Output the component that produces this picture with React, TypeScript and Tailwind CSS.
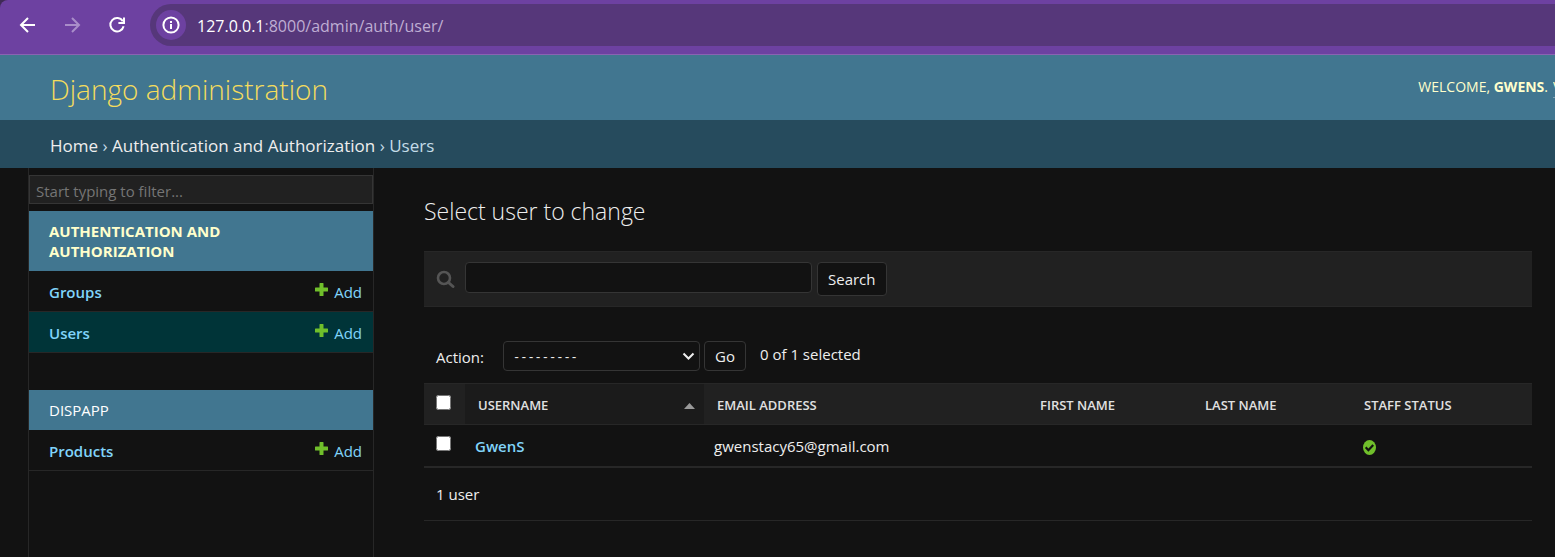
import type { ReactNode } from "react";

const models = [
  {
    app: "Authentication and Authorization",
    current: true,
    items: [
      { name: "Groups", current: false },
      { name: "Users", current: true },
    ],
  },
  { app: "Dispapp", current: false, items: [{ name: "Products", current: false }] },
];

function BrowserBar() {
  return (
    <div className="bg-[#3f2a56]">
      <div className="flex h-[55px] items-start rounded-tl-lg border-b border-[#8a62b2] bg-[#6d41a1] pt-1">
        <div className="flex h-[42px] shrink-0 items-center gap-[21px] pl-4 text-white">
          <button type="button" aria-label="Back">
            <svg className="size-6" viewBox="0 0 24 24" fill="none" stroke="currentColor" strokeWidth="2">
              <path d="M19 12H5.500M12 5l-7 7 7 7" />
            </svg>
          </button>
          <button type="button" aria-label="Forward" className="text-[#a98dc9]">
            <svg className="size-6" viewBox="0 0 24 24" fill="none" stroke="currentColor" strokeWidth="2">
              <path d="M4 12h13.500M11 5l7 7-7 7" />
            </svg>
          </button>
          <button type="button" aria-label="Reload">
            <svg className="size-6" viewBox="0 0 24 24" fill="none" stroke="currentColor" strokeWidth="2">
              <path d="M16.800 8.200A6.700 6.700 0 1 0 17.600 13.200M18 4.500V10h-5.600" />
            </svg>
          </button>
        </div>
        <div className="ml-5 flex h-[42px] flex-1 items-center gap-[11px] rounded-l-full bg-[#56377a] pl-[6px]">
          <button
            type="button"
            aria-label="Site information"
            className="flex size-[30px] items-center justify-center rounded-full bg-[#6d41a1] text-white"
          >
            <svg className="size-[18px]" viewBox="0 0 18 18" fill="none" stroke="currentColor" strokeWidth="2">
              <circle cx="9" cy="9" r="7.600" />
              <path d="M9 8v5M9 5v2" />
            </svg>
          </button>
          <div className="pt-[2px] text-[16px] text-[#bfaed3]">
            <span className="text-white">127.0.0.1</span>:8000/admin/auth/user/
          </div>
        </div>
      </div>
    </div>
  );
}

function PlusIcon() {
  return (
    <svg className="mb-[6px] size-[13px]" viewBox="0 0 13 13" fill="#70bf2b" aria-hidden="true">
      <path d="M5 0h3q.500 0 .500.500v4H12.500q.500 0 .500.500v3q0 .500-.500.500h-4v4q0 .500-.500.500H5q-.500 0-.500-.500v-4h-4Q0 8.500 0 8V5q0-.500.500-.500h4v-4Q4.500 0 5 0z" />
    </svg>
  );
}

function Sidebar() {
  return (
    <nav className="ml-7 w-[346px] shrink-0 border-x border-[#272727] pt-[7px]" aria-label="Sidebar">
      <input
        type="text"
        aria-label="Filter navigation items"
        placeholder="Start typing to filter..."
        className="mb-[7px] block h-[29px] w-full border border-[#353535] bg-[#212121] px-[6px] pt-[2px] text-[15px] text-[#eeeeee] placeholder:text-[#757575]"
      />
      {models.map((group) => (
        <section key={group.app} className="mb-[37px]">
          <h2
            className={
              group.current
                ? "bg-[#417690] px-5 py-[10px] text-[15px] leading-5 font-bold text-[#ffffcc] uppercase"
                : "bg-[#417690] px-5 py-[10px] text-[15px] leading-5 text-white uppercase"
            }
          >
            <a href="#app" className="block w-[220px]">{group.app}</a>
          </h2>
          {group.items.map((item) => (
            <div
              key={item.name}
              className={
                item.current
                  ? "flex h-[41px] items-center justify-between border-b border-[#272727] bg-[#003438] pt-[2px] pr-[11px] pl-5 text-[15px] text-[#81d4fa]"
                  : "flex h-[41px] items-center justify-between border-b border-[#272727] pt-[2px] pr-[11px] pl-5 text-[15px] text-[#81d4fa]"
              }
            >
              <a href="#list" className="font-semibold">{item.name}</a>
              <a href="#add" className="flex items-center gap-[6px]">
                <PlusIcon />
                Add
              </a>
            </div>
          ))}
        </section>
      ))}
    </nav>
  );
}

function ToolButton({ children }: { children: ReactNode }) {
  return (
    <button
      type="button"
      className="ml-[5px] rounded border border-[#353535] bg-[#121212] px-[10px] py-1 text-[15px] leading-6 text-[#eeeeee]"
    >
      {children}
    </button>
  );
}

function Th({ children }: { children: ReactNode }) {
  return <th className="px-[13px] pt-1 text-left font-semibold">{children}</th>;
}

function Changelist() {
  return (
    <main className="min-w-0 flex-1 pt-[26px] pr-[23px] pl-[50px] text-[#eeeeee]">
      <h1 className="text-[23px] leading-[34px] font-light">Select user to change</h1>
      <form className="mt-[23px] flex h-14 items-start border-y border-[#272727] bg-[#212121] pt-[10px] pl-3">
        <label htmlFor="searchbar" className="mt-2 mr-[10px]">
          <svg className="size-[19px]" viewBox="0 0 19 19" fill="none" stroke="#555555" aria-label="Search">
            <circle cx="8" cy="8" r="6" strokeWidth="2.600" />
            <path d="M12.500 12.500l4.500 4" strokeWidth="3" strokeLinecap="round" />
          </svg>
        </label>
        <input
          id="searchbar"
          type="text"
          className="h-[31px] w-[347px] rounded border border-[#353535] bg-[#121212] px-2 text-[15px]"
        />
        <ToolButton>Search</ToolButton>
      </form>
      <div className="mt-[33px] flex h-[32px] items-center pl-3 text-[15px]">
        <label htmlFor="action" className="w-[67px] pt-[2px]">Action:</label>
        <div className="relative w-[197px]">
          <select
            id="action"
            className="block h-[30px] w-full appearance-none rounded border border-[#353535] bg-[#121212] px-[9px] pt-1 font-['Liberation_Mono',monospace] text-[12px]"
          >
            <option>---------</option>
          </select>
          <svg
            className="pointer-events-none absolute top-[11px] right-[5px] h-[9px] w-[13px]"
            viewBox="0 0 13 9"
            fill="none"
            stroke="#eeeeee"
            strokeWidth="2"
          >
            <path d="M1.500 1.500l5 5 5-5" />
          </svg>
        </div>
        <button
          type="button"
          className="ml-1 h-[30px] rounded border border-[#353535] bg-[#121212] px-[10px]"
        >
          Go
        </button>
        <span className="ml-[14px] pb-1">0 of 1 selected</span>
      </div>
      <table className="mt-[11px] w-full table-fixed border-separate border-spacing-0">
        <colgroup>
          <col className="w-[41px]" />
          <col className="w-[239px]" />
          <col className="w-[323px]" />
          <col className="w-[165px]" />
          <col className="w-[159px]" />
          <col />
        </colgroup>
        <thead>
          <tr className="h-[42px] bg-[#212121] text-[13px] text-[#e0e0e0] uppercase *:border-y *:border-[#272727]">
            <th className="pl-3 text-left">
              <input type="checkbox" aria-label="Select all users" className="mb-1 block size-[15px]" />
            </th>
            <th className="bg-[#1b1b1b] px-[13px] pt-1 font-semibold" aria-sort="ascending">
              <div className="-mr-1 flex items-center justify-between">
                <a href="#sort">Username</a>
                <svg className="h-[6px] w-[11px]" viewBox="0 0 11 6" fill="#999999" aria-hidden="true">
                  <path d="M5.500 0L11 6H0z" />
                </svg>
              </div>
            </th>
            <Th>Email address</Th>
            <Th>First name</Th>
            <Th>Last name</Th>
            <Th>Staff status</Th>
          </tr>
        </thead>
        <tbody>
          <tr className="h-[43px] text-[15px] *:border-b-2 *:border-[#272727]">
            <td className="pl-3">
              <input type="checkbox" aria-label="Select GwenS" className="mb-1 block size-[15px]" />
            </td>
            <th scope="row" className="px-[10px] pt-[2px] text-left font-semibold text-[#81d4fa]">
              <a href="#user">GwenS</a>
            </th>
            <td className="px-[10px] pt-[2px]">gwenstacy65@gmail.com</td>
            <td />
            <td />
            <td className="px-3 pt-1">
              <svg className="h-[15px] w-[13px]" viewBox="0 0 13 15" role="img" aria-label="True">
                <ellipse cx="6.500" cy="7.500" rx="6.500" ry="7.500" fill="#70bf2b" />
                <path d="M2.700 7.200l2.700 3 4.800-5.200" fill="none" stroke="#121212" strokeWidth="2.200" />
              </svg>
            </td>
          </tr>
        </tbody>
      </table>
      <p className="border-b border-[#272727] px-3 pt-[14px] pb-[14px] text-[15px] leading-6">1 user</p>
    </main>
  );
}

export default function App() {
  return (
    <div className="flex min-h-screen flex-col overflow-x-hidden bg-[#121212] font-['Open_Sans','Noto_Sans',sans-serif]">
      <BrowserBar />
      <header className="flex h-[65px] items-center justify-between bg-[#417690] pl-[50px]">
        <a href="#home" className="pt-[2px] text-[28px] leading-9 font-light text-[#f5dd5d]">Django administration</a>
        <div className="flex text-[14px] leading-5 text-[#ffffcc] uppercase">
          <span>
            Welcome, <strong>GwenS</strong>.
          </span>
          <a href="#site" className="ml-[5px] w-[2px] overflow-hidden border-b border-[#7fa3b4] whitespace-nowrap">
            View site
          </a>
        </div>
      </header>
      <div className="h-12 bg-[#264b5d] px-[50px] pt-[14px] text-[17px] leading-6 text-[#c4dce8]">
        <a href="#home" className="text-[#eeeeee]">Home</a> ›{" "}
        <a href="#auth" className="text-[#eeeeee]">Authentication and Authorization</a> › Users
      </div>
      <div className="flex flex-1">
        <Sidebar />
        <Changelist />
      </div>
    </div>
  );
}
